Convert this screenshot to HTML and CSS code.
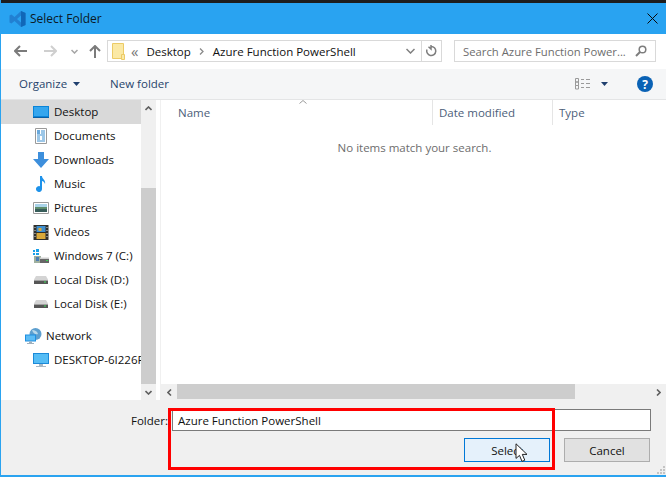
FILE: index.html
```html
<!DOCTYPE html>
<html lang="en">
<head>
<meta charset="utf-8">
<title>Select Folder</title>
<link rel="stylesheet" href="styles.css">
</head>
<body>
<div class="dialog">
  <div class="topstrip"></div>
  <header class="titlebar">
    <svg class="applogo" width="17" height="16" viewBox="0 0 16 16"><path d="M11.500 0 16 2v12l-4.500 2L5 10 2 12.500 0 11.500v-7L2 3.500 5 6zM11.500 4.500 7.500 8l4 3.500z" fill="#2180d2" fill-rule="evenodd"/><path d="M11.500 0 16 2v12l-4.500 2v-4.500V4.500z" fill="#1067b8"/></svg>
    <span class="titletext">Select Folder</span>
    <svg class="closex" width="11" height="11" viewBox="0 0 11 11"><path d="M.5.500l10 10M10.500.500l-10 10" stroke="#0a0a0a" stroke-width="1" fill="none"/></svg>
  </header>
  <nav class="navbar">
    <svg class="nav-back" width="13" height="12" viewBox="0 0 13 12"><path d="M6 1 1 6l5 5M1 6h12" stroke="#7b7b7b" stroke-width="2" fill="none"/></svg>
    <svg class="nav-fwd" width="13" height="12" viewBox="0 0 13 12"><path d="M7 1l5 5-5 5M12 6H0" stroke="#cfcfcf" stroke-width="2" fill="none"/></svg>
    <svg class="nav-down" width="7" height="5" viewBox="0 0 7 5"><path d="M.5 1 3.500 4l3-3" stroke="#a5a5a5" stroke-width="1.500" fill="none"/></svg>
    <svg class="nav-up" width="12" height="13" viewBox="0 0 12 13"><path d="M1 6l5-5 5 5M6 1v12" stroke="#7b7b7b" stroke-width="2" fill="none"/></svg>
    <div class="address">
      <svg class="addr-folder" width="13" height="17" viewBox="0 0 13 17"><path d="M.5.500h11v15h-11z" fill="#fbe9a5" stroke="#eccb66"/><path d="M9.500 11.500h3v5h-3z" fill="#fbe9a5" stroke="#eccb66"/></svg>
      <span class="crumb-more">«</span>
      <span class="crumb">Desktop</span>
      <svg class="crumb-sep" width="5" height="7" viewBox="0 0 5 7"><path d="M1 .5l3 3-3 3" stroke="#8a8a8a" stroke-width="1.300" fill="none"/></svg>
      <span class="crumb">Azure Function PowerShell</span>
      <svg class="addr-chev" width="9" height="6" viewBox="0 0 9 6"><path d="M.5 1l4 4 4-4" stroke="#7f7f7f" stroke-width="1.500" fill="none"/></svg>
      <div class="addr-refresh">
        <svg width="11" height="12" viewBox="0 0 11 12"><path d="M5 1.500a4.500 4.500 0 1 1-4 3M5 0v4L2.500 1.800" stroke="#7d7d7d" stroke-width="1.500" fill="none"/></svg>
      </div>
    </div>
    <div class="searchbox">
      <span class="search-text">Search Azure Function Power...</span>
      <svg width="12" height="12" viewBox="0 0 12 12"><circle cx="7.500" cy="4.500" r="3.300" stroke="#7d7d7d" stroke-width="1.500" fill="none"/><path d="M5 7 1 11" stroke="#7d7d7d" stroke-width="2"/></svg>
    </div>
  </nav>
  <div class="toolbar">
    <span class="tool">Organize</span>
    <svg class="caret" width="7" height="4" viewBox="0 0 7 4"><path d="M0 0h7L3.500 4z" fill="#1f3f6e"/></svg>
    <span class="tool tool-new">New folder</span>
    <svg class="viewicon" width="16" height="12" viewBox="0 0 16 12"><path d="M.5.500h3v3.500h-3zM.5 4h3v3.500h-3zM.5 7.500h3V11h-3z" fill="none" stroke="#9a9a9a"/><path d="M6 1.500h3M11 1.500h4M6 5.500h3M11 5.500h4M6 9.500h3M11 9.500h4" stroke="#9a9a9a" fill="none"/></svg>
    <svg class="caret caret-view" width="7" height="4" viewBox="0 0 7 4"><path d="M0 0h7L3.500 4z" fill="#1f3f6e"/></svg>
    <span class="help">?</span>
  </div>
  <main class="panes">
    <aside class="sidebar">
      <ul class="tree">
        <li class="row row-sel"><svg width="16" height="12" viewBox="0 0 16 12"><path d="M0 0h16v12H0z" fill="#0a84d8"/><path d="M1 1h14v9H1z" fill="#35a6ee"/><path d="M0 11h16v1H0z" fill="#0b5fa5"/></svg><span>Desktop</span></li>
        <li class="row"><svg width="16" height="16" viewBox="0 0 16 16"><path d="M2.500.500h11v15h-11z" fill="#fff" stroke="#9a9a9a"/><path d="M8 3h4M8 5h4M4 7h8M4 9h3M9 9h3M4 11h3M9 11h3M4 13h8" stroke="#3a8fd0"/><path d="M4 2h3v4H4z" fill="#6aa9dc"/></svg><span>Documents</span></li>
        <li class="row"><svg width="16" height="16" viewBox="0 0 16 16"><path d="M5 0h6v7h5l-8 9-8-9h5z" fill="#3d8fdc"/></svg><span>Downloads</span></li>
        <li class="row"><svg width="16" height="16" viewBox="0 0 16 16"><path d="M7 0h2c0 3 4 4 3 8-.5-2-2-3-3-3v8a3 3 0 1 1-2-2.800z" fill="#1d92ea"/></svg><span>Music</span></li>
        <li class="row"><svg width="16" height="12" viewBox="0 0 16 12"><path d="M.5.500h15v11H.5z" fill="#fff" stroke="#9a9a9a"/><path d="M2 2h12v3H2z" fill="#a9d3e8"/><path d="M2 5h12v2H2z" fill="#5d8c6c"/><path d="M2 7h12v3H2z" fill="#375d5a"/></svg><span>Pictures</span></li>
        <li class="row"><svg width="15" height="15" viewBox="0 0 15 15"><path d="M0 0h15v15H0z" fill="#30302c"/><path d="M3 1h9v6H3z" fill="#3f8fcf"/><path d="M3 8h9v6H3z" fill="#d9a93a"/><path d="M5 3h3v3H5z" fill="#d9a93a"/><path d="M1 2h1v1H1zM1 5h1v1H1zM1 8h1v1H1zM1 11h1v1H1zM13 2h1v1h-1zM13 5h1v1h-1zM13 8h1v1h-1zM13 11h1v1h-1z" fill="#ddd"/></svg><span>Videos</span></li>
        <li class="row"><svg width="16" height="15" viewBox="0 0 16 15"><path d="M0 1h2v2H0zM3 0h3v3H3zM0 4h2v2H0zM3 4h3v2H3z" fill="#19a0e8"/><path d="M1 7h7v7H1z" fill="#9fb09f"/><path d="M3 8h3v4H3z" fill="#4f7db0"/><path d="M7 9h9v5H7z" fill="#666"/><path d="M7 8.500h9V10H7z" fill="#cfcfcf"/><path d="M13 11h2v1h-2z" fill="#39d353"/></svg><span>Windows 7 (C:)</span></li>
        <li class="row"><svg width="16" height="8" viewBox="0 0 16 8"><path d="M3 0h10l2 3.500v1H1v-1z" fill="#d4d4d4"/><path d="M1 4.500h14V8H1z" fill="#565656"/><path d="M11 5.500h2v1h-2z" fill="#3fe05a"/></svg><span>Local Disk (D:)</span></li>
        <li class="row"><svg width="16" height="8" viewBox="0 0 16 8"><path d="M3 0h10l2 3.500v1H1v-1z" fill="#d4d4d4"/><path d="M1 4.500h14V8H1z" fill="#565656"/><path d="M11 5.500h2v1h-2z" fill="#3fe05a"/></svg><span>Local Disk (E:)</span></li>
        <li class="row row-net"><svg width="17" height="16" viewBox="0 0 17 16"><circle cx="10.500" cy="6" r="6" fill="#5d9fcf"/><path d="M7 2c3 0 5 1 6 4-3 1-5-1-6-4z" fill="#b8d8ea"/><path d="M0 6.500h11v7H0z" fill="#1f8fe0"/><path d="M1 7.500h9v5H1z" fill="#5cbcf5"/><path d="M4 13.500h3V15h2v1H2v-1h2z" fill="#9fb0bd"/></svg><span>Network</span></li>
        <li class="row"><svg width="16" height="15" viewBox="0 0 16 15"><path d="M0 0h16v11H0z" fill="#1c8ad8"/><path d="M1 1h14v9H1z" fill="#56bdf5"/><path d="M6 11h4v2h3v1H3v-1h3z" fill="#a9b8c4"/></svg><span class="clip">DESKTOP-6I226F</span></li>
      </ul>
      <div class="vscroll">
        <div class="sbtn"><svg width="7" height="5" viewBox="0 0 7 5"><path d="M.5 4 3.500 1l3 3" stroke="#606060" stroke-width="1.600" fill="none"/></svg></div>
        <div class="vtrack"><div class="vthumb"></div></div>
        <div class="sbtn"><svg width="7" height="5" viewBox="0 0 7 5"><path d="M.5 1 3.500 4l3-3" stroke="#606060" stroke-width="1.600" fill="none"/></svg></div>
      </div>
    </aside>
    <section class="files">
      <div class="headers">
        <svg class="sortmark" width="8" height="4" viewBox="0 0 8 4"><path d="M.5 3.500 4 .5l3.500 3" stroke="#9a9a9a" fill="none"/></svg>
        <div class="col col-name">Name</div>
        <div class="col col-date">Date modified</div>
        <div class="col col-type">Type</div>
      </div>
      <div class="empty">No items match your search.</div>
      <div class="hscroll">
        <div class="hbtn"><svg width="5" height="7" viewBox="0 0 5 7"><path d="M4 .5l-3 3 3 3" stroke="#606060" stroke-width="1.600" fill="none"/></svg></div>
        <div class="htrack"><div class="hthumb"></div></div>
        <div class="hbtn"><svg width="5" height="7" viewBox="0 0 5 7"><path d="M1 .5l3 3-3 3" stroke="#606060" stroke-width="1.600" fill="none"/></svg></div>
      </div>
    </section>
  </main>
  <footer class="footer">
    <div class="folder-row">
      <label class="folder-label">Folder:</label>
      <div class="folder-input">Azure Function PowerShell</div>
    </div>
    <div class="btn-row">
      <div class="btn btn-primary">Select</div>
      <div class="btn">Cancel</div>
    </div>
    <svg class="grip" width="8" height="8" viewBox="0 0 8 8"><path d="M6 0h2v2H6zM3 3h2v2H3zM6 3h2v2H6zM0 6h2v2H0zM3 6h2v2H3zM6 6h2v2H6z" fill="#c4c4c4"/></svg>
  </footer>
  <div class="redbox"></div>
  <svg class="cursor" width="13" height="20" viewBox="0 0 13 20"><path d="M1 .8v14.600l3.500-3 2.500 6 2.800-1.200-2.500-5.800h4.700z" fill="#fff" stroke="#222" stroke-width="1"/></svg>
</div>
</body>
</html>
```
FILE: styles.css
```css
* { box-sizing: border-box; }
html, body { margin: 0; padding: 0; }
body { width: 666px; height: 477px; overflow: hidden; background: #fff; font-family: "Open Sans", "Noto Sans", sans-serif; font-size: 11.5px; color: #111; }
svg { display: block; flex: none; }
.dialog { position: relative; width: 666px; height: 477px; display: flex; flex-direction: column; border-left: 1px solid #2aa3f0; overflow: hidden; }

.topstrip { height: 3px; background: #1d1d1d; margin-left: -1px; flex: none; }
.titlebar { height: 31px; flex: none; margin-left: -1px; background: #29a3f1; display: flex; align-items: center; padding-left: 9px; }
.titletext { margin-left: 4px; font-size: 12px; color: #0b1a26; }
.closex { margin-left: auto; margin-right: 8px; }

.navbar { height: 35px; flex: none; background: #fff; display: flex; align-items: center; padding-left: 13px; padding-bottom: 1px; }
.nav-fwd { margin-left: 17px; }
.nav-down { margin-left: 14px; }
.nav-up { margin-left: 11px; }
.address { margin-left: 6px; width: 335px; height: 22px; border: 1px solid #d9d9d9; display: flex; align-items: center; padding-left: 4px; font-size: 11.5px; }
.crumb-more { margin-left: 6px; color: #777; font-size: 15px; line-height: 1; }
.crumb { margin-left: 8px; }
.crumb-sep { margin-left: 8px; margin-right: 1px; }
.addr-chev { margin-left: auto; margin-right: 6px; }
.addr-refresh { width: 20px; height: 20px; border-left: 1px solid #d9d9d9; display: flex; align-items: center; justify-content: center; }
.searchbox { margin-left: 12px; width: 202px; height: 22px; border: 1px solid #d9d9d9; display: flex; align-items: center; justify-content: space-between; padding: 0 8px; color: #6d6d6d; }
.search-text { white-space: nowrap; font-size: 11.300px; }

.toolbar { height: 31px; flex: none; background: #f5f6f7; border-bottom: 1px solid #e4e5e6; display: flex; align-items: center; padding-left: 19px; margin-left: -1px; color: #27446b; }
.tool { padding-bottom: 2px; }
.caret { margin-left: 6px; }
.tool-new { margin-left: 30px; }
.viewicon { margin-left: auto; }
.caret-view { margin-left: 10px; }
.help { margin-left: 29px; margin-right: 13px; width: 16px; height: 16px; border-radius: 50%; background: #0a62b5; color: #fff; font-weight: 700; font-size: 12px; display: flex; align-items: center; justify-content: center; }

.panes { height: 300px; flex: none; display: flex; background: #fff; }
.sidebar { width: 156px; flex: none; display: flex; }
.tree { list-style: none; margin: 0; padding: 0; width: 140px; flex: none; }
.row { height: 24px; display: flex; align-items: center; padding-left: 32px; white-space: nowrap; overflow: hidden; }
.row > svg { margin-right: 5px; width: 16px; }
.row > span { padding-bottom: 2px; }
.row-sel { background: #d9d9d9; }
.row-net { margin-top: 8px; padding-left: 24px; }
.row-net > svg { width: 17px; margin-right: 4px; }
.clip { overflow: hidden; }
.vscroll { width: 15px; flex: none; background: #f0f0f0; display: flex; flex-direction: column; }
.sbtn { height: 16px; flex: none; display: flex; align-items: center; justify-content: center; }
.vtrack { flex: 1; display: flex; flex-direction: column; justify-content: flex-end; }
.vthumb { height: 196px; background: #cdcdcd; }

.files { flex: 1; min-width: 0; display: flex; flex-direction: column; margin-left: 3px; border-left: 1px solid #f0f0f0; position: relative; }
.headers { height: 25px; flex: none; display: flex; position: relative; color: #4c607a; }
.sortmark { position: absolute; left: 138px; top: 0; }
.col { display: flex; align-items: center; height: 25px; border-right: 1px solid #e5e5e5; }
.col-name { width: 272px; padding-left: 17px; }
.col-date { width: 120px; padding-left: 6px; }
.col-type { flex: 1; padding-left: 6px; border-right: 0; }
.empty { flex: 1; text-align: center; color: #6d6d6d; padding-top: 15px; padding-left: 2px; }
.hscroll { height: 16px; flex: none; display: flex; background: #f0f0f0; }
.hbtn { width: 16px; flex: none; display: flex; align-items: center; justify-content: center; }
.htrack { flex: 1; }
.hthumb { width: 398px; height: 15px; background: #cdcdcd; }

.footer { height: 75px; flex: none; background: #f0f0f0; position: relative; display: flex; flex-direction: column; margin-bottom: 2px; }
.folder-row { display: flex; align-items: center; margin-top: 9px; padding-left: 130px; }
.folder-label { width: 37px; text-align: right; white-space: nowrap; }
.folder-input { margin-left: 4px; width: 479px; height: 22px; background: #fff; border: 1px solid #7a7a7a; padding-left: 5px; display: flex; align-items: center; }
.btn-row { display: flex; margin-top: 7px; gap: 14px; padding-left: 463px; }
.btn { width: 86px; height: 24px; background: #e1e1e1; border: 1px solid #adadad; display: flex; align-items: center; justify-content: center; }
.btn-primary { background: #e5f1fb; border-color: #0078d7; }
.grip { position: absolute; right: 1px; bottom: 1px; }
.dialog::after { content: ""; position: absolute; left: -1px; right: 0; bottom: 0; height: 2px; background: #2aa3f0; }

.redbox { position: absolute; left: 167px; top: 408px; width: 387px; height: 62px; border: 3px solid #f00; }
.cursor { position: absolute; left: 514px; top: 443px; }
```
